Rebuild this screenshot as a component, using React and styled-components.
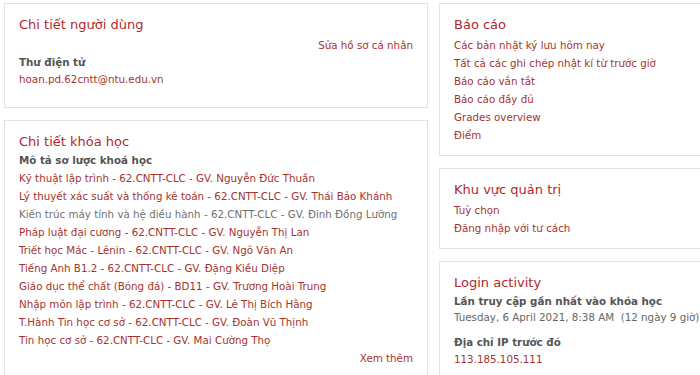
import React from "react";
import styled, { createGlobalStyle } from "styled-components";

const Global = createGlobalStyle`
  html, body {
    margin: 0;
    background: #fff;
    overflow: hidden;
  }
  body {
    font-family: "DejaVu Sans", Verdana, sans-serif;
    font-size: 10.3px;
    color: #555;
  }
`;

const Page = styled.div`
  display: grid;
  grid-template-columns: 424px 300px;
  column-gap: 11px;
  padding: 3px 0 0 4px;
  width: 760px;
`;

const Column = styled.div`
  display: flex;
  flex-direction: column;
  gap: 12px;
`;

const Card = styled.section`
  border: 1px solid #e3e3e3;
  padding: 11px 14px ${(p) => p.$bottom || 14}px 14px;
`;

const Title = styled.h3`
  margin: 0 0 ${(p) => p.$gap || 0}px;
  font-size: 13px;
  font-weight: normal;
  line-height: 20px;
  color: #b1272c;
`;

const Link = styled.a`
  display: block;
  color: ${(p) => (p.$muted ? "#707070" : "#a5332f")};
  text-decoration: none;
  line-height: ${(p) => p.$lh || 18}px;
  white-space: nowrap;
  text-align: ${(p) => (p.$right ? "right" : "left")};
`;

const Label = styled.div`
  font-weight: bold;
  color: #555;
  line-height: 17px;
  margin-top: ${(p) => p.$top || 0}px;
`;

const Value = styled.div`
  line-height: 15px;
  color: #666;
  white-space: nowrap;
`;

const courses = [
  "Kỹ thuật lập trình - 62.CNTT-CLC - GV. Nguyễn Đức Thuần",
  "Lý thuyết xác suất và thống kê toán - 62.CNTT-CLC - GV. Thái Bảo Khánh",
  "Kiến trúc máy tính và hệ điều hành - 62.CNTT-CLC - GV. Đinh Đồng Lưỡng",
  "Pháp luật đại cương - 62.CNTT-CLC - GV. Nguyễn Thị Lan",
  "Triết học Mác - Lênin - 62.CNTT-CLC - GV. Ngô Văn An",
  "Tiếng Anh B1.2 - 62.CNTT-CLC - GV. Đặng Kiều Diệp",
  "Giáo dục thể chất (Bóng đá) - BD11 - GV. Trương Hoài Trung",
  "Nhập môn lập trình - 62.CNTT-CLC - GV. Lê Thị Bích Hằng",
  "T.Hành Tin học cơ sở - 62.CNTT-CLC - GV. Đoàn Vũ Thịnh",
  "Tin học cơ sở - 62.CNTT-CLC - GV. Mai Cường Thọ",
];

const reports = [
  "Các bản nhật ký lưu hôm nay",
  "Tất cả các ghi chép nhật kí từ trước giờ",
  "Báo cáo vắn tắt",
  "Báo cáo đầy đủ",
  "Grades overview",
  "Điểm",
];

export default function App() {
  return (
    <>
      <Global />
      <Page>
        <Column>
          <Card $bottom={20}>
            <Title $gap={1}>Chi tiết người dùng</Title>
            <Link $right href="#">Sửa hồ sơ cá nhân</Link>
            <Label>Thư điện tử</Label>
            <Link href="#" $lh={16}>hoan.pd.62cntt@ntu.edu.vn</Link>
          </Card>
          <Card>
            <Title>Chi tiết khóa học</Title>
            <Label>Mô tả sơ lược khoá học</Label>
            {courses.map((c, i) => (
              <Link key={c} href="#" $muted={i === 2}>{c}</Link>
            ))}
            <Link $right href="#">Xem thêm</Link>
          </Card>
        </Column>
        <Column>
          <Card $bottom={11}>
            <Title $gap={1}>Báo cáo</Title>
            {reports.map((r) => (
              <Link key={r} href="#">{r}</Link>
            ))}
          </Card>
          <Card $bottom={11}>
            <Title $gap={1}>Khu vực quản trị</Title>
            <Link href="#">Tuỳ chọn</Link>
            <Link href="#">Đăng nhập với tư cách</Link>
          </Card>
          <Card>
            <Title>Login activity</Title>
            <Label>Lần truy cập gần nhất vào khóa học</Label>
            <Value>Tuesday, 6 April 2021, 8:38 AM&nbsp; (12 ngày 9 giờ)</Value>
            <Label $top={9}>Địa chỉ IP trước đó</Label>
            <Link href="#" $lh={16}>113.185.105.111</Link>
          </Card>
        </Column>
      </Page>
    </>
  );
}
